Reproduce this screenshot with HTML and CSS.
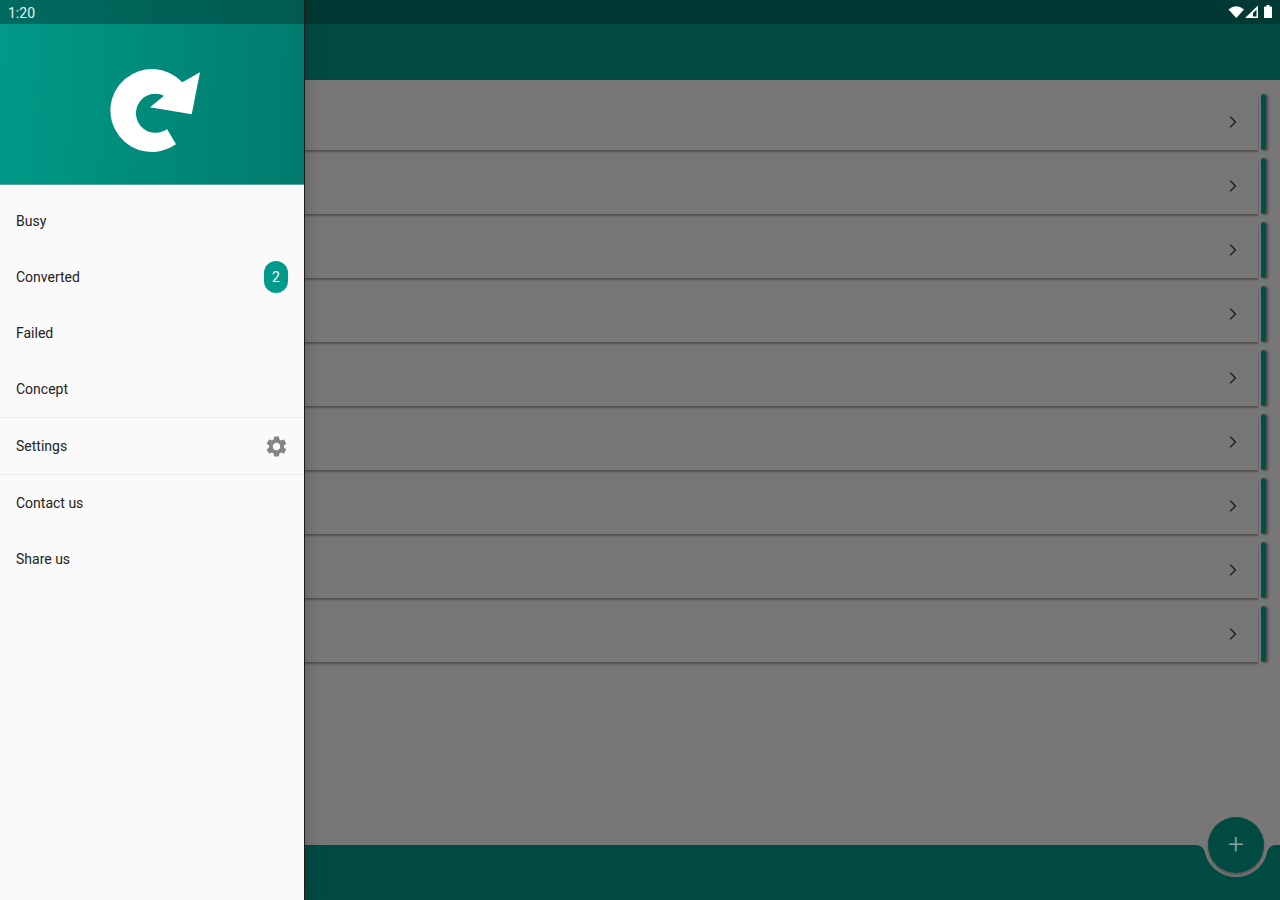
FILE: index.html
```html
<!DOCTYPE html>
<html lang="en">
<head>
  <meta charset="UTF-8" />
  <title>Converter</title>
  <link rel="stylesheet" href="styles.css">
</head>
<body>
  <div class="app">
    <div class="status-bar"></div>
    <div class="app-bar"></div>
    <div class="list">
      <div class="card"><div class="card-body"><svg class="chevron" width="10" height="14" viewBox="0 0 10 14"><path d="M2 1.500 L7.500 7 L2 12.500" fill="none" stroke="#444" stroke-width="1.500"/></svg></div><div class="card-strip"></div></div>
      <div class="card"><div class="card-body"><svg class="chevron" width="10" height="14" viewBox="0 0 10 14"><path d="M2 1.500 L7.500 7 L2 12.500" fill="none" stroke="#444" stroke-width="1.500"/></svg></div><div class="card-strip"></div></div>
      <div class="card"><div class="card-body"><svg class="chevron" width="10" height="14" viewBox="0 0 10 14"><path d="M2 1.500 L7.500 7 L2 12.500" fill="none" stroke="#444" stroke-width="1.500"/></svg></div><div class="card-strip"></div></div>
      <div class="card"><div class="card-body"><svg class="chevron" width="10" height="14" viewBox="0 0 10 14"><path d="M2 1.500 L7.500 7 L2 12.500" fill="none" stroke="#444" stroke-width="1.500"/></svg></div><div class="card-strip"></div></div>
      <div class="card"><div class="card-body"><svg class="chevron" width="10" height="14" viewBox="0 0 10 14"><path d="M2 1.500 L7.500 7 L2 12.500" fill="none" stroke="#444" stroke-width="1.500"/></svg></div><div class="card-strip"></div></div>
      <div class="card"><div class="card-body"><svg class="chevron" width="10" height="14" viewBox="0 0 10 14"><path d="M2 1.500 L7.500 7 L2 12.500" fill="none" stroke="#444" stroke-width="1.500"/></svg></div><div class="card-strip"></div></div>
      <div class="card"><div class="card-body"><svg class="chevron" width="10" height="14" viewBox="0 0 10 14"><path d="M2 1.500 L7.500 7 L2 12.500" fill="none" stroke="#444" stroke-width="1.500"/></svg></div><div class="card-strip"></div></div>
      <div class="card"><div class="card-body"><svg class="chevron" width="10" height="14" viewBox="0 0 10 14"><path d="M2 1.500 L7.500 7 L2 12.500" fill="none" stroke="#444" stroke-width="1.500"/></svg></div><div class="card-strip"></div></div>
      <div class="card"><div class="card-body"><svg class="chevron" width="10" height="14" viewBox="0 0 10 14"><path d="M2 1.500 L7.500 7 L2 12.500" fill="none" stroke="#444" stroke-width="1.500"/></svg></div><div class="card-strip"></div></div>
    </div>
    <div class="bottom-bar">
      <div class="bar-fill"></div>
      <svg class="notch" width="80" height="55" viewBox="0 0 80 55">
        <path d="M0 0 Q8 0 9.600 10 A32 32 0 0 0 70.400 10 Q72 0 80 0 V55 H0 Z" fill="#009484"/>
      </svg>
      <div class="bar-end"></div>
    </div>
    <div class="scrim"></div>
    <svg class="status-icons" width="46" height="24" viewBox="0 0 46 24">
      <path d="M0.500 9.500 Q8 3 16 9.500 L8.300 18 Z" fill="#fff"/>
      <path d="M17 18 L30 5.500 V18 Z M25 16.500 H28.500 V9.500 L25 13 Z" fill="#fff" fill-rule="evenodd"/>
      <path d="M36 7.500 Q36 6.500 37 6.500 H38.500 V5 H41.500 V6.500 H43 Q44 6.500 44 7.500 V18 H36 Z" fill="#fff"/>
    </svg>
    <div class="fab"><span class="fab-plus">+</span></div>
  </div>

  <div class="drawer">
    <div class="drawer-status">1:20</div>
    <div class="drawer-header">
      <svg width="130" height="110" viewBox="90 55 130 110">
        <path d="M176 144.300 A41.500 41.500 0 1 1 182.300 82.300 L200 72.300 L191.700 114.300 L150 107.300 L164 95.700 A19.500 19.500 0 1 0 167 129 Z" fill="#fff"/>
      </svg>
    </div>
    <div class="menu-group first">
      <div class="menu-item">Busy</div>
      <div class="menu-item">Converted <span class="badge">2</span></div>
      <div class="menu-item">Failed</div>
      <div class="menu-item">Concept</div>
    </div>
    <div class="menu-group bordered">
      <div class="menu-item">Settings
        <svg class="gear" width="25" height="25" viewBox="0 0 24 24">
          <path d="M19.140 12.940c.04-.3.060-.61.060-.94 0-.32-.02-.64-.07-.94l2.030-1.580c.18-.14.230-.41.120-.61l-1.920-3.320c-.12-.22-.37-.29-.59-.22l-2.390.96c-.5-.38-1.030-.7-1.620-.94l-.36-2.540c-.04-.24-.24-.41-.48-.41h-3.840c-.24 0-.43.170-.47.410l-.36 2.540c-.59.240-1.130.570-1.620.94l-2.390-.96c-.22-.08-.47 0-.59.220L2.740 8.870c-.12.210-.08.470.12.610l2.030 1.580c-.05.3-.09.630-.09.940s.02.640.07.940l-2.030 1.580c-.18.140-.23.410-.12.610l1.920 3.320c.12.220.37.290.59.220l2.390-.96c.5.380 1.030.7 1.620.94l.36 2.540c.05.240.24.410.48.410h3.840c.24 0 .44-.17.470-.41l.36-2.540c.59-.24 1.130-.56 1.620-.94l2.390.96c.22.080.47 0 .59-.22l1.920-3.320c.12-.22.070-.47-.12-.61l-2.010-1.580zM12 15.600c-1.980 0-3.600-1.620-3.600-3.600s1.620-3.600 3.600-3.600 3.600 1.620 3.600 3.600-1.620 3.600-3.600 3.600z" fill="#858585"/>
        </svg>
      </div>
    </div>
    <div class="menu-group">
      <div class="menu-item">Contact us</div>
      <div class="menu-item">Share us</div>
    </div>
  </div>
</body>
</html>
```

FILE: styles.css
```css
html, body {
  margin: 0;
  padding: 0;
  height: 100%;
  overflow: hidden;
  font-family: Roboto, "Liberation Sans", sans-serif;
}
.app {
  position: relative;
  width: 1280px;
  height: 900px;
  display: flex;
  flex-direction: column;
  background: #eee;
}
.status-bar {
  height: 24px;
  background: #007066;
}
.status-icons {
  position: absolute;
  left: 1228px;
  top: 0;
}
.app-bar {
  height: 56px;
  background: #009484;
}
.list {
  flex: 1;
  padding: 14px 14px 0 304px;
  display: flex;
  flex-direction: column;
  gap: 8px;
}
.card {
  height: 56px;
  display: flex;
  gap: 3px;
}
.card-body {
  flex: 1;
  height: 56px;
  background: #eee;
  box-shadow: 0 1px 3px rgba(0,0,0,0.08), 0 2px 2px rgba(0,0,0,0.3);
  display: flex;
  align-items: center;
  justify-content: flex-end;
  padding-right: 20px;
}
.card-strip {
  width: 5px;
  height: 56px;
  background: #00a08e;
  border-radius: 3px;
  box-shadow: 2px 1px 3px rgba(0,0,0,0.4);
}
.bottom-bar {
  height: 55px;
  display: flex;
}
.bar-fill {
  flex: 1;
  background: #009484;
}
.bar-end {
  width: 4px;
  background: #009484;
}
.notch {
  display: block;
}
.scrim {
  position: absolute;
  inset: 0;
  background: rgba(0,0,0,0.5);
}
.fab {
  position: absolute;
  left: 1208px;
  top: 817px;
  width: 56px;
  height: 56px;
  border-radius: 50%;
  background: #004a42;
  box-shadow: 0 2px 3px rgba(0,0,0,0.3);
  display: flex;
  align-items: center;
  justify-content: center;
}
.fab-plus {
  color: #7fa6a2;
  font-size: 28px;
  font-weight: 300;
  line-height: 1;
}
.drawer {
  position: absolute;
  left: 0;
  top: 0;
  width: 304px;
  height: 900px;
  background: #fafafa;
  border-right: 1px solid #1c1c1c;
  box-shadow: 2px 0 14px rgba(0,0,0,0.18);
}
.drawer-status {
  height: 24px;
  line-height: 27px;
  padding-left: 8px;
  color: #e6f2f0;
  font-size: 14px;
  background: linear-gradient(93deg, #006b5f, #005a50);
}
.drawer-header {
  height: 161px;
  background: linear-gradient(93deg, #009a88, #007b6d);
  border-bottom: 1px solid #5aa69c;
  box-sizing: border-box;
  display: flex;
  align-items: center;
  justify-content: center;
}
.drawer-header svg {
  margin-top: 12px;
  margin-left: 6px;
}
.menu-group.first {
  padding-top: 8px;
}
.menu-group.bordered {
  border-top: 1px solid #ececec;
  border-bottom: 1px solid #ececec;
}
.menu-item {
  height: 56px;
  padding: 0 16px;
  display: flex;
  align-items: center;
  justify-content: space-between;
  font-size: 14px;
  color: #222;
}
.badge {
  width: 24px;
  height: 32px;
  border-radius: 12px;
  background: #009a8a;
  color: #fff;
  display: flex;
  align-items: center;
  justify-content: center;
  font-size: 14px;
}
.gear {
  margin-right: -0.5px;
}
```
